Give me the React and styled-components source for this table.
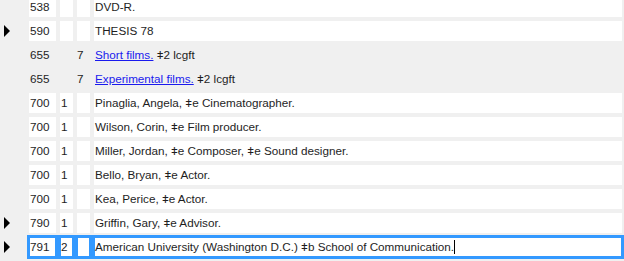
import React from "react";
import styled, { createGlobalStyle, css } from "styled-components";

const GlobalStyle = createGlobalStyle`
  html, body {
    margin: 0;
    padding: 0;
    background: #f0f0f0;
    overflow: hidden;
  }
  body {
    font-family: "Liberation Sans", Arial, sans-serif;
    font-size: 11.7px;
    color: #1e1e1e;
  }
`;

const Editor = styled.div`
  width: 624px;
  height: 261px;
  overflow: hidden;
  background: #f0f0f0;
`;

// field list is scrolled a few pixels, so the first row is clipped at the top
const FieldList = styled.div`
  display: flex;
  flex-direction: column;
  gap: 4px;
  margin-top: -3px;
  padding-right: 2px;
`;

const Row = styled.div`
  display: grid;
  grid-template-columns: 25px 27px 13px 13px 1fr;
  column-gap: 4px;
  height: 20px;
`;

const Marker = styled.div`
  display: flex;
  align-items: center;
  padding-left: 4px;
  &::before {
    content: "";
    display: ${(p) => (p.$on ? "block" : "none")};
    width: 0;
    height: 0;
    border-top: 6px solid transparent;
    border-bottom: 6px solid transparent;
    border-left: 6px solid #000;
  }
`;

const Cell = styled.div`
  background: ${(p) => (p.$plain ? "transparent" : "#fff")};
  line-height: 20px;
  padding-left: ${(p) => p.$pad ?? 1}px;
  white-space: nowrap;
  overflow: hidden;
  ${(p) =>
    p.$active &&
    css`
      box-shadow: 0 0 0 2px #3399ff, inset 0 0 0 1px #3399ff;
    `}
`;

const Link = styled.a`
  color: #1a1aee;
  text-decoration: underline;
`;

const Caret = styled.span`
  display: inline-block;
  width: 1px;
  height: 14px;
  background: #000;
  vertical-align: -3px;
`;

const fields = [
  { tag: "538", i1: "", i2: "", text: "DVD-R." },
  { tag: "590", i1: "", i2: "", text: "THESIS 78", mark: true },
  { tag: "655", i1: "", i2: "7", link: "Short films.", text: " ǂ2 lcgft", plain: true },
  { tag: "655", i1: "", i2: "7", link: "Experimental films.", text: " ǂ2 lcgft", plain: true },
  { tag: "700", i1: "1", i2: "", text: "Pinaglia, Angela, ǂe Cinematographer." },
  { tag: "700", i1: "1", i2: "", text: "Wilson, Corin, ǂe Film producer." },
  { tag: "700", i1: "1", i2: "", text: "Miller, Jordan, ǂe Composer, ǂe Sound designer." },
  { tag: "700", i1: "1", i2: "", text: "Bello, Bryan, ǂe Actor." },
  { tag: "700", i1: "1", i2: "", text: "Kea, Perice, ǂe Actor." },
  { tag: "790", i1: "1", i2: "", text: "Griffin, Gary, ǂe Advisor.", mark: true },
  {
    tag: "791",
    i1: "2",
    i2: "",
    text: "American University (Washington D.C.) ǂb School of Communication.",
    mark: true,
    active: true,
  },
];

export default function App() {
  return (
    <Editor>
      <GlobalStyle />
      <FieldList>
        {fields.map((f, i) => (
          <Row key={i}>
            <Marker $on={f.mark} />
            <Cell $plain={f.plain} $active={f.active}>
              {f.tag}
            </Cell>
            <Cell $plain={f.plain} $active={f.active}>
              {f.i1}
            </Cell>
            <Cell $plain={f.plain} $active={f.active} $pad={f.plain ? 0 : 1}>
              {f.i2}
            </Cell>
            <Cell $plain={f.plain} $active={f.active}>
              {f.link && <Link href="#">{f.link}</Link>}
              {f.text}
              {f.active && <Caret />}
            </Cell>
          </Row>
        ))}
      </FieldList>
    </Editor>
  );
}
